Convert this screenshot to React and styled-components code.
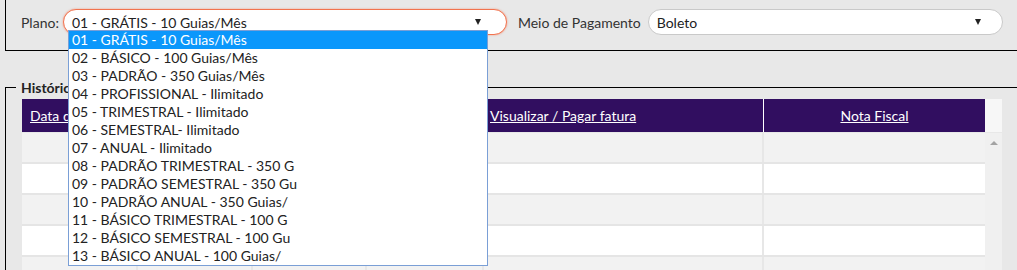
import styled, { createGlobalStyle } from 'styled-components'

const Global = createGlobalStyle`
  html, body {
    margin: 0;
    height: 270px;
    overflow: hidden;
    background: #e8e8e8;
    font-family: Lato, "Open Sans", sans-serif;
    font-size: 14px;
    color: #333;
  }
`

const TopPanel = styled.div`
  margin-left: 5px;
  height: 51px;
  box-sizing: border-box;
  border-left: 1px solid #000;
  border-bottom: 1px solid #000;
  padding: 0 0 6px 15px;
  display: flex;
  align-items: center;
`

const Label = styled.span`
  color: #333;
  margin-right: ${p => p.$gap || 4}px;
  margin-left: ${p => p.$offset || 0}px;
`

const SelectBox = styled.div`
  position: relative;
  box-sizing: border-box;
  width: ${p => p.$width}px;
  height: 26px;
  border-radius: 13px;
  background: #fff;
  border: 1px solid ${p => (p.$focus ? '#f2734f' : '#c9c9c9')};
  box-shadow: ${p => (p.$focus ? '0 0 2px rgba(242,115,79,0.7)' : 'none')};
  display: flex;
  align-items: center;
  justify-content: space-between;
  padding: 0 ${p => p.$arrowPad}px 0 8px;
  color: #222;
`

const Arrow = styled.span`
  width: 0;
  height: 0;
  border-left: 3px solid transparent;
  border-right: 3px solid transparent;
  border-top: 6px solid #222;
`

const Dropdown = styled.ul`
  position: absolute;
  left: 4px;
  top: 20px;
  z-index: 10;
  box-sizing: border-box;
  width: 420px;
  margin: 0;
  padding: 0;
  list-style: none;
  background: #fff;
  border: 1px solid #7a9fd6;
`

const Option = styled.li`
  height: 18px;
  line-height: 18px;
  padding-left: 3px;
  white-space: nowrap;
  color: ${p => (p.$selected ? '#fff' : '#222')};
  background: ${p => (p.$selected ? '#0b97fb' : '#fff')};
`

const Fieldset = styled.fieldset`
  margin: 28px 0 0 5px;
  padding: 0;
  border: 1px solid #000;
  border-right: none;
  border-bottom: none;
  min-width: 0;
`

const Legend = styled.legend`
  margin-left: 10px;
  padding: 0 5px;
  font-weight: bold;
  color: #222;
  line-height: 17px;
`

const TableArea = styled.div`
  display: flex;
  margin: 3px 0 0 16px;
`

const Grid = styled.div`
  width: 963px;
`

const cols = '116px 115px 114px 117px 280px 221px'

const HeadRow = styled.div`
  display: grid;
  grid-template-columns: ${cols};
  height: 33px;
  background: #310e60;
  margin-bottom: 1px;
`

const HeadCell = styled.div`
  display: flex;
  align-items: center;
  justify-content: ${p => p.$align || 'center'};
  padding-left: ${p => p.$pad || 0}px;
  border-right: ${p => (p.$last ? 'none' : '1px solid #fff')};
  color: #fff;
  text-decoration: underline;
  white-space: nowrap;
  overflow: hidden;
`

const BodyRow = styled.div`
  display: grid;
  grid-template-columns: ${cols};
  height: 29px;
  border-bottom: 2px solid #e5e5e5;
  background: ${p => (p.$alt ? '#f2f2f2' : '#fff')};
`

const BodyCell = styled.div`
  border-right: ${p => (p.$last ? 'none' : '2px solid #e7e7e7')};
`

const ScrollBar = styled.div`
  width: 17px;
  display: flex;
  flex-direction: column;
`

const Corner = styled.div`
  height: 33px;
  background: #f7f7f7;
  margin-bottom: 1px;
`

const Track = styled.div`
  flex: 1;
  height: 200px;
  background: #f0f0f0;
  display: flex;
  justify-content: center;
  padding-top: 8px;
`

const UpArrow = styled.span`
  width: 0;
  height: 0;
  border-left: 4px solid transparent;
  border-right: 4px solid transparent;
  border-bottom: 4px solid #a3a3a3;
`

const plans = [
  '01 - GRÁTIS - 10 Guias/Mês',
  '02 - BÁSICO - 100 Guias/Mês',
  '03 - PADRÃO - 350 Guias/Mês',
  '04 - PROFISSIONAL - Ilimitado',
  '05 - TRIMESTRAL - Ilimitado',
  '06 - SEMESTRAL- Ilimitado',
  '07 - ANUAL - Ilimitado',
  '08 - PADRÃO TRIMESTRAL - 350 G',
  '09 - PADRÃO SEMESTRAL - 350 Gu',
  '10 - PADRÃO ANUAL - 350 Guias/',
  '11 - BÁSICO TRIMESTRAL - 100 G',
  '12 - BÁSICO SEMESTRAL - 100 Gu',
  '13 - BÁSICO ANUAL - 100 Guias/',
]

const App = () => {
  return (
    <>
      <Global />
      <TopPanel>
        <Label>Plano:</Label>
        <SelectBox $width={444} $arrowPad={25} $focus>
          <span>01 - GRÁTIS - 10 Guias/Mês</span>
          <Arrow />
          <Dropdown>
            {plans.map((p, i) => (
              <Option key={p} $selected={i === 0}>{p}</Option>
            ))}
          </Dropdown>
        </SelectBox>
        <Label $offset={11} $gap={7}>Meio de Pagamento</Label>
        <SelectBox $width={355} $arrowPad={21}>
          <span>Boleto</span>
          <Arrow />
        </SelectBox>
      </TopPanel>

      <Fieldset>
        <Legend>Histórico de Faturas</Legend>
        <TableArea>
          <Grid>
            <HeadRow>
              <HeadCell $align="flex-start" $pad={8}>Data de Emissão</HeadCell>
              <HeadCell>Vencimento</HeadCell>
              <HeadCell>Valor</HeadCell>
              <HeadCell>Situação</HeadCell>
              <HeadCell $align="flex-start" $pad={6}>Visualizar / Pagar fatura</HeadCell>
              <HeadCell $last>Nota Fiscal</HeadCell>
            </HeadRow>
            {[0, 1, 2, 3, 4, 5].map(r => (
              <BodyRow key={r} $alt={r % 2 === 0}>
                {[0, 1, 2, 3, 4, 5].map(c => (
                  <BodyCell key={c} $last={c === 5} />
                ))}
              </BodyRow>
            ))}
          </Grid>
          <ScrollBar>
            <Corner />
            <Track>
              <UpArrow />
            </Track>
          </ScrollBar>
        </TableArea>
      </Fieldset>
    </>
  )
}

export default App
